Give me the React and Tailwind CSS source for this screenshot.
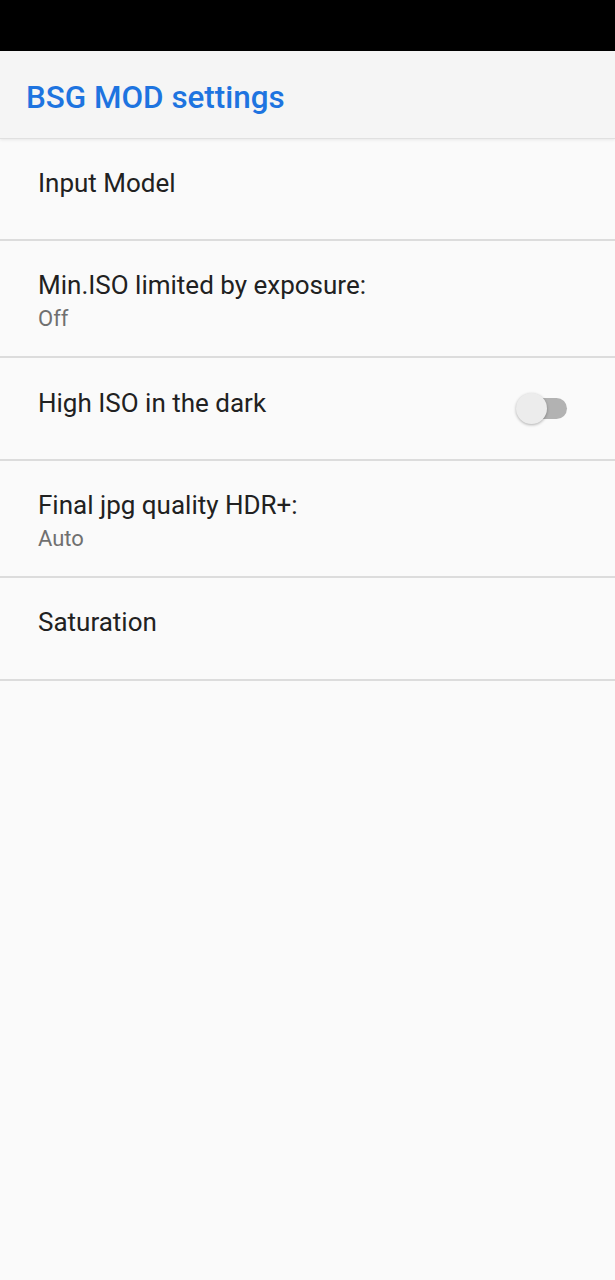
export default function App() {
  const font = { fontFamily: 'Roboto, "Noto Sans", sans-serif' };
  return (
    <div className="w-[615px] h-[1280px] bg-[#fafafa] flex flex-col" style={font}>
      <div className="h-[51px] bg-black shrink-0" />
      <div className="h-[88px] bg-[#f5f5f5] pl-[26px] pt-[29px] border-b border-[#e0e0e0] shadow-[0_1px_3px_rgba(0,0,0,0.08)] relative z-10 shrink-0">
        <div className="text-[31.4px] leading-[36px] font-medium text-[#1e74e0]">BSG MOD settings</div>
      </div>
      <div className="h-[102px] pl-[38px] pt-[28px] border-b-2 border-[#dcdcdc]">
        <div className="text-[26px] leading-[32px] text-[#212121]">Input Model</div>
      </div>
      <div className="h-[117px] pl-[38px] pt-[28px] border-b-2 border-[#dcdcdc]">
        <div className="text-[26px] leading-[32px] text-[#212121]">Min.ISO limited by exposure:</div>
        <div className="text-[22px] leading-[35px] text-[#707070]">Off</div>
      </div>
      <div className="h-[103px] flex items-center pl-[38px] pr-[48px] border-b-2 border-[#dcdcdc]">
        <div className="text-[26px] leading-[32px] text-[#212121] self-start pt-[29px] flex-1">High ISO in the dark</div>
        <div className="relative w-[51px] h-[32px] flex items-center">
          <div className="absolute left-[14px] right-0 h-[21px] rounded-full bg-[#b2b2b2]" />
          <div className="absolute left-0 w-[31px] h-[31px] rounded-full bg-[#ececec] shadow-[0_1px_3px_rgba(0,0,0,0.3)]" />
        </div>
      </div>
      <div className="h-[117px] pl-[38px] pt-[28px] border-b-2 border-[#dcdcdc]">
        <div className="text-[26px] leading-[32px] text-[#212121]">Final jpg quality HDR+:</div>
        <div className="text-[22px] leading-[35px] text-[#707070]">Auto</div>
      </div>
      <div className="h-[103px] pl-[38px] pt-[28px] border-b-2 border-[#dcdcdc]">
        <div className="text-[26px] leading-[32px] text-[#212121]">Saturation</div>
      </div>
    </div>
  );
}
